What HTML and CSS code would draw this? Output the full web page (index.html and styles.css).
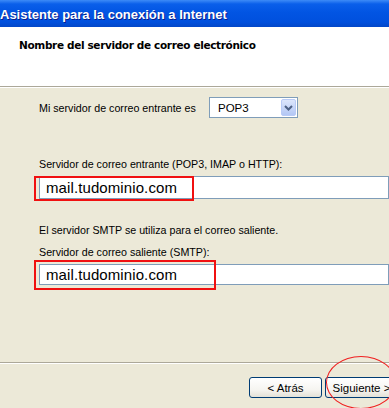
FILE: index.html
```html
<!DOCTYPE html>
<html lang="es">
<head>
<meta charset="utf-8">
<title>Asistente para la conexión a Internet</title>
<link rel="stylesheet" href="styles.css">
</head>
<body>
<div class="window">
  <div class="titlebar"><span class="title">Asistente para la conexión a Internet</span></div>
  <div class="header"><span class="subtitle">Nombre del servidor de correo electrónico</span></div>
  <div class="content">
    <div class="row">
      <span class="label">Mi servidor de correo entrante es</span>
      <div class="select">
        <span class="select-value">POP3</span>
        <span class="select-btn">
          <svg width="9" height="6" viewBox="0 0 9 6"><path d="M1 1 L4.5 4.5 L8 1" fill="none" stroke="#4D6185" stroke-width="2"/></svg>
        </span>
      </div>
    </div>
    <div class="text lbl-in">Servidor de correo entrante (POP3, IMAP o HTTP):</div>
    <div class="field field-in">
      <span class="field-value">mail.tudominio.com</span>
      <span class="mark mark-in"></span>
    </div>
    <div class="text note">El servidor SMTP se utiliza para el correo saliente.</div>
    <div class="text lbl-out">Servidor de correo saliente (SMTP):</div>
    <div class="field field-out">
      <span class="field-value">mail.tudominio.com</span>
      <span class="mark mark-out"></span>
    </div>
  </div>
  <div class="footer">
    <button class="btn">&lt; Atrás</button>
    <button class="btn">Siguiente &gt;</button>
    <span class="circle"></span>
  </div>
</div>
</body>
</html>
```
FILE: styles.css
```css
html, body {
  margin: 0;
  padding: 0;
  background: #ECE9D8;
  overflow: hidden;
}
.window {
  width: 389px;
  height: 408px;
  display: flex;
  flex-direction: column;
  position: relative;
  overflow: hidden;
  font-family: "Liberation Sans", Arial, sans-serif;
  font-size: 10.7px;
  color: #000;
}
.titlebar {
  height: 27px;
  flex: none;
  background: linear-gradient(to bottom, #3D8BF7 0px, #0A5FEA 4px, #0255E3 12px, #0050DD 22px, #0347C8 27px);
  display: flex;
  align-items: center;
}
.title {
  font-family: "Liberation Sans", Arial, sans-serif;
  font-weight: bold;
  font-size: 13px;
  color: #fff;
  text-shadow: 1px 1px 0 #0A1E8C;
  padding-left: 0;
  margin-top: 1px;
}
.header {
  height: 60px;
  box-sizing: border-box;
  flex: none;
  background: #fff;
  border-bottom: 1px solid #ACA899;
  box-shadow: 0 1px 0 #fff;
  padding: 11px 0 0 19px;
}
.subtitle {
  font-family: "DejaVu Sans", Verdana, sans-serif;
  font-weight: bold;
  font-size: 10.5px;
  letter-spacing: -0.35px;
  line-height: 14px;
}
.content {
  padding: 10px 0 0 39px;
  display: flex;
  flex-direction: column;
}
.row {
  display: flex;
  align-items: center;
  height: 21px;
}
.label {
  width: 170px;
  flex: none;
}
.select {
  width: 89px;
  height: 21px;
  box-sizing: border-box;
  border: 1px solid #7F9DB9;
  background: #fff;
  display: flex;
  align-items: center;
  justify-content: space-between;
  padding: 1px;
}
.select-value {
  padding-left: 7px;
  font-size: 11.5px;
}
.select-btn {
  width: 15px;
  height: 17px;
  border-radius: 2px;
  background: linear-gradient(to bottom, #DCE6FC, #B3C7F4);
  border: 1px solid #B9CBF7;
  box-sizing: border-box;
  display: flex;
  align-items: center;
  justify-content: center;
}
.text {
  line-height: 13px;
}
.lbl-in { margin-top: 40px; }
.note { margin-top: 25px; }
.lbl-out { margin-top: 9px; }
.field {
  position: relative;
  height: 23px;
  box-sizing: border-box;
  border: 1px solid #7F9DB9;
  background: #fff;
  display: flex;
  align-items: center;
  margin-top: 5px;
}
.field-out { height: 21px; margin-top: 5px; }
.field-value {
  font-size: 15px;
  padding-left: 6px;
  letter-spacing: 0.1px;
}
.mark {
  position: absolute;
  border: 2px solid #F01010;
  box-sizing: border-box;
}
.mark-in {
  left: -6px;
  top: -1px;
  width: 160px;
  height: 25px;
}
.mark-out {
  left: -6px;
  top: -5px;
  width: 182px;
  height: 30px;
}
.footer {
  margin-top: auto;
  height: 46px;
  box-sizing: border-box;
  border-top: 1px solid #ACA899;
  box-shadow: inset 0 1px 0 #fff;
  display: flex;
  gap: 3px;
  padding: 14px 0 0 249px;
  position: relative;
}
.btn {
  width: 73px;
  height: 21px;
  flex: none;
  border: 1px solid #003C74;
  border-radius: 3px;
  background: linear-gradient(to bottom, #FFFFFF 0%, #F6F5F1 60%, #E3E1D7 100%);
  font-family: "Liberation Sans", Arial, sans-serif;
  font-size: 11.5px;
  color: #000;
  padding: 0;
}
.circle {
  position: absolute;
  left: 326px;
  top: -7px;
  width: 70px;
  height: 53px;
  border: 1.5px solid #F02020;
  border-radius: 50%;
  box-sizing: border-box;
}
```
